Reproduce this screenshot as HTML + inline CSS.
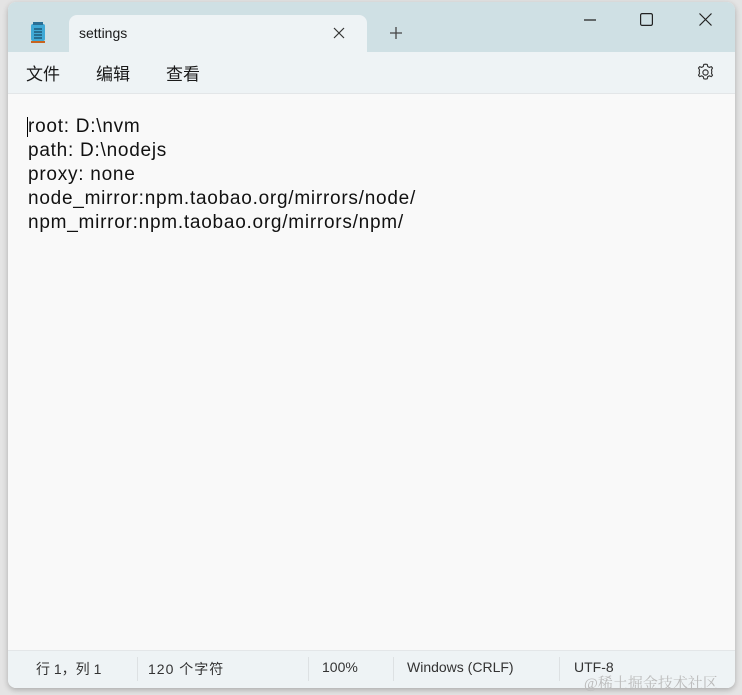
<!DOCTYPE html>
<html><head><meta charset="utf-8"><style>
*{margin:0;padding:0;box-sizing:border-box}
body{width:742px;height:695px;background:#e4e4e4;position:relative;overflow:hidden;font-family:"Liberation Sans","Noto Sans CJK SC",sans-serif;color:#1a1a1a}
.win{position:absolute;left:8px;top:2px;width:727px;height:686px;border-radius:8px;overflow:hidden;background:#f9f9f9;box-shadow:0 2px 6px rgba(0,0,0,.25)}
.title{position:absolute;left:0;top:0;right:0;height:50px;background:#cfe0e4}
.tab{position:absolute;left:61px;top:13px;width:298px;height:40px;background:#eef3f5;border-radius:8px 8px 0 0}
.menu{position:absolute;left:0;top:50px;right:0;height:42px;background:#eef3f5;border-bottom:1px solid #e3e6e8}
.status{position:absolute;left:0;bottom:0;right:0;height:38px;background:#eef3f5;border-top:1px solid #e3e6e8;font-size:14px;color:#333}
.t{position:absolute;white-space:nowrap}
.txt{position:absolute;left:20px;top:113px;font-size:19px;letter-spacing:0.75px;line-height:24px;color:#111}
.sep{position:absolute;top:6px;width:1px;height:24px;background:#dde1e3}
</style></head><body>
<div class="win">
<div class="title"></div>
<div class="tab"></div>
<svg style="position:absolute;left:22px;top:20px" width="16" height="22" viewBox="0 0 16 22"><rect x="1" y="2" width="14" height="17" rx="2" fill="#3fa9d6"/><rect x="3" y="0" width="10" height="3" fill="#2a6f95"/><path d="M4 7h8M4 10h8M4 13h8M4 16h8" stroke="#174a66" stroke-width="1.2"/><rect x="1" y="19" width="14" height="2" fill="#c8641e"/></svg>
<div class="t" style="left:71px;top:23px;font-size:14px">settings</div>
<svg style="position:absolute;left:325px;top:25px" width="12" height="12"><path d="M1 1L11 11M11 1L1 11" stroke="#333" stroke-width="1.2"/></svg>
<svg style="position:absolute;left:382px;top:25px" width="12" height="12"><path d="M6 0V12M0 6H12" stroke="#444" stroke-width="1.3"/></svg>
<svg style="position:absolute;left:576px;top:17px" width="12" height="2"><path d="M0 1H12" stroke="#222" stroke-width="1.2"/></svg>
<svg style="position:absolute;left:632px;top:11px" width="13" height="13"><rect x="0.6" y="0.6" width="11.8" height="11.8" rx="1.5" fill="none" stroke="#222" stroke-width="1.2"/></svg>
<svg style="position:absolute;left:691px;top:11px" width="13" height="13"><path d="M0.5 0.5L12.5 12.5M12.5 0.5L0.5 12.5" stroke="#222" stroke-width="1.2"/></svg>
<div class="menu">
<div class="t" style="left:18px;top:8px;font-size:17px">文件</div>
<div class="t" style="left:88px;top:8px;font-size:17px">编辑</div>
<div class="t" style="left:158px;top:8px;font-size:17px">查看</div>
<svg style="position:absolute;left:687px;top:10px" width="21" height="21" viewBox="0 0 24 24"><path d="M12 2.5l2 .3.5 2.4 1.8 1 2.3-.9 1.4 1.6-1.2 2.1.4 2-.4 2 1.2 2.1-1.4 1.6-2.3-.9-1.8 1-.5 2.4-2 .3-2-.3-.5-2.4-1.8-1-2.3.9-1.4-1.6 1.2-2.1-.4-2 .4-2-1.2-2.1 1.4-1.6 2.3.9 1.8-1 .5-2.4z" fill="none" stroke="#333" stroke-width="1.3" stroke-linejoin="round"/><circle cx="12" cy="12" r="3" fill="none" stroke="#333" stroke-width="1.3"/></svg>
</div>
<div style="position:absolute;left:19px;top:115px;width:1px;height:20px;background:#000"></div>
<div class="txt">root: D:\nvm<br>path: D:\nodejs<br>proxy: none<br>node_mirror:npm.taobao.org/mirrors/node/<br>npm_mirror:npm.taobao.org/mirrors/npm/</div>
<div class="status">
<div class="t" style="left:28px;top:8px">行 1，列 1</div>
<div class="sep" style="left:129px"></div>
<div class="t" style="left:140px;top:8px;letter-spacing:1px">120 个字符</div>
<div class="sep" style="left:300px"></div>
<div class="t" style="left:314px;top:8px">100%</div>
<div class="sep" style="left:385px"></div>
<div class="t" style="left:399px;top:8px">Windows (CRLF)</div>
<div class="sep" style="left:551px"></div>
<div class="t" style="left:566px;top:8px">UTF-8</div>
</div>
</div>
<div class="t" style="left:584px;top:672px;font-size:15px;color:#bbb;font-family:'Liberation Serif','Noto Serif CJK SC',serif">@稀土掘金技术社区</div>
</body></html>
